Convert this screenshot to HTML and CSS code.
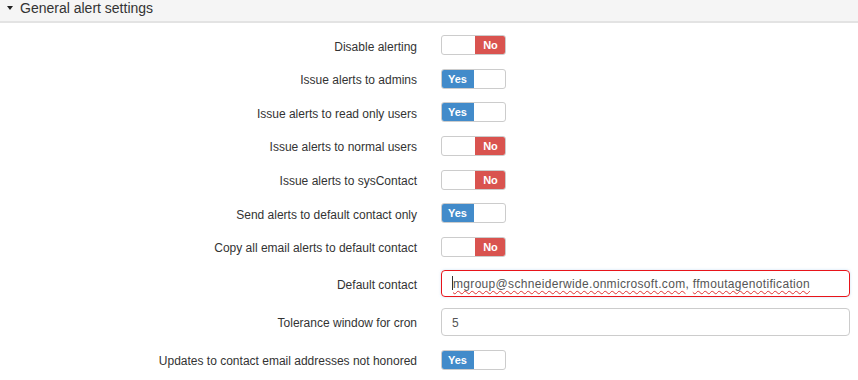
FILE: index.html
```html
<!DOCTYPE html>
<html>
<head>
<meta charset="utf-8">
<link rel="stylesheet" href="styles.css">
</head>
<body>
<div class="panel-head">
  <span class="caret"></span>
  <span class="panel-title">General alert settings</span>
</div>
<div class="form">
  <div class="row r-toggle">
    <label class="lbl">Disable alerting</label>
    <div class="switch"><span class="blank"></span><span class="no">No</span></div>
  </div>
  <div class="row r-toggle">
    <label class="lbl">Issue alerts to admins</label>
    <div class="switch"><span class="yes">Yes</span><span class="blank"></span></div>
  </div>
  <div class="row r-toggle">
    <label class="lbl">Issue alerts to read only users</label>
    <div class="switch"><span class="yes">Yes</span><span class="blank"></span></div>
  </div>
  <div class="row r-toggle">
    <label class="lbl">Issue alerts to normal users</label>
    <div class="switch"><span class="blank"></span><span class="no">No</span></div>
  </div>
  <div class="row r-toggle">
    <label class="lbl">Issue alerts to sysContact</label>
    <div class="switch"><span class="blank"></span><span class="no">No</span></div>
  </div>
  <div class="row r-toggle">
    <label class="lbl">Send alerts to default contact only</label>
    <div class="switch"><span class="yes">Yes</span><span class="blank"></span></div>
  </div>
  <div class="row r-toggle">
    <label class="lbl">Copy all email alerts to default contact</label>
    <div class="switch"><span class="blank"></span><span class="no">No</span></div>
  </div>
  <div class="row r-input1">
    <label class="lbl">Default contact</label>
    <div class="field focus"><span class="cursor"></span><span class="val"><span class="sp">mgroup@schneiderwide.onmicrosoft.com</span>, <span class="sp">ffmoutagenotification</span></span></div>
  </div>
  <div class="row r-input2">
    <label class="lbl">Tolerance window for cron</label>
    <div class="field"><span class="val">5</span></div>
  </div>
  <div class="row r-last">
    <label class="lbl">Updates to contact email addresses not honored</label>
    <div class="switch"><span class="yes">Yes</span><span class="blank"></span></div>
  </div>
</div>
</body>
</html>
```
FILE: styles.css
```css
html, body {
  margin: 0;
  padding: 0;
  background: #fff;
  width: 858px;
  height: 380px;
  overflow: hidden;
  font-family: "Liberation Sans", Arial, sans-serif;
  color: #333;
}
.panel-head {
  height: 21px;
  background: #f5f5f5;
  border-bottom: 2px solid #e3e3e3;
  display: flex;
  align-items: center;
  padding-left: 7px;
  box-sizing: content-box;
}
.caret {
  width: 0;
  height: 0;
  border-left: 3px solid transparent;
  border-right: 3px solid transparent;
  border-top: 4px solid #222;
  margin-right: 7px;
  margin-top: -5px;
}
.panel-title {
  font-size: 14px;
  color: #333;
  margin-top: -6px;
}
.form {
  padding-top: 12px;
  padding-right: 8px;
}
.row {
  display: grid;
  grid-template-columns: 417px 1fr;
  column-gap: 24px;
  align-items: center;
}
.r-toggle + .r-toggle { margin-top: 13.67px; }
.r-input1 { margin-top: 13px; }
.r-input2 { margin-top: 11px; }
.r-last { margin-top: 14px; }
.lbl {
  font-size: 12px;
  text-align: right;
  color: #333;
  white-space: nowrap;
  padding-top: 3px;
}
.switch {
  width: 65px;
  height: 20px;
  box-sizing: border-box;
  border: 1px solid #ccc;
  border-radius: 3px;
  display: flex;
  overflow: hidden;
  font-size: 11px;
  font-weight: bold;
  color: #fff;
}
.switch span { display: flex; align-items: center; justify-content: center; }
.switch .yes { width: 33px; background: #428bca; margin: -1px 0 -1px -1px; border-radius: 3px 0 0 3px; }
.switch .no { width: 31px; background: #d9534f; margin: -1px -1px -1px 0; border-radius: 0 3px 3px 0; }
.switch .blank { flex: 1; }
.field {
  height: 28px;
  box-sizing: border-box;
  border: 1px solid #ccc;
  border-radius: 4px;
  display: flex;
  align-items: center;
  padding-left: 10px;
  font-size: 12px;
  color: #555;
}
.field.focus {
  height: 27px;
  border-color: #e8141a;
  box-shadow: 0 0 3px rgba(102, 175, 233, 0.35);
}
.field .val {
  white-space: nowrap;
  line-height: 20px;
  padding-top: 2px;
}
.field.focus .val { letter-spacing: 0.32px; }
.cursor {
  width: 1px;
  height: 14px;
  background: #333;
  flex: none;
}
.sp {
  text-decoration-line: underline;
  text-decoration-style: wavy;
  text-decoration-color: #e03030;
  text-decoration-thickness: 1px;
  text-underline-offset: 2px;
}
```
